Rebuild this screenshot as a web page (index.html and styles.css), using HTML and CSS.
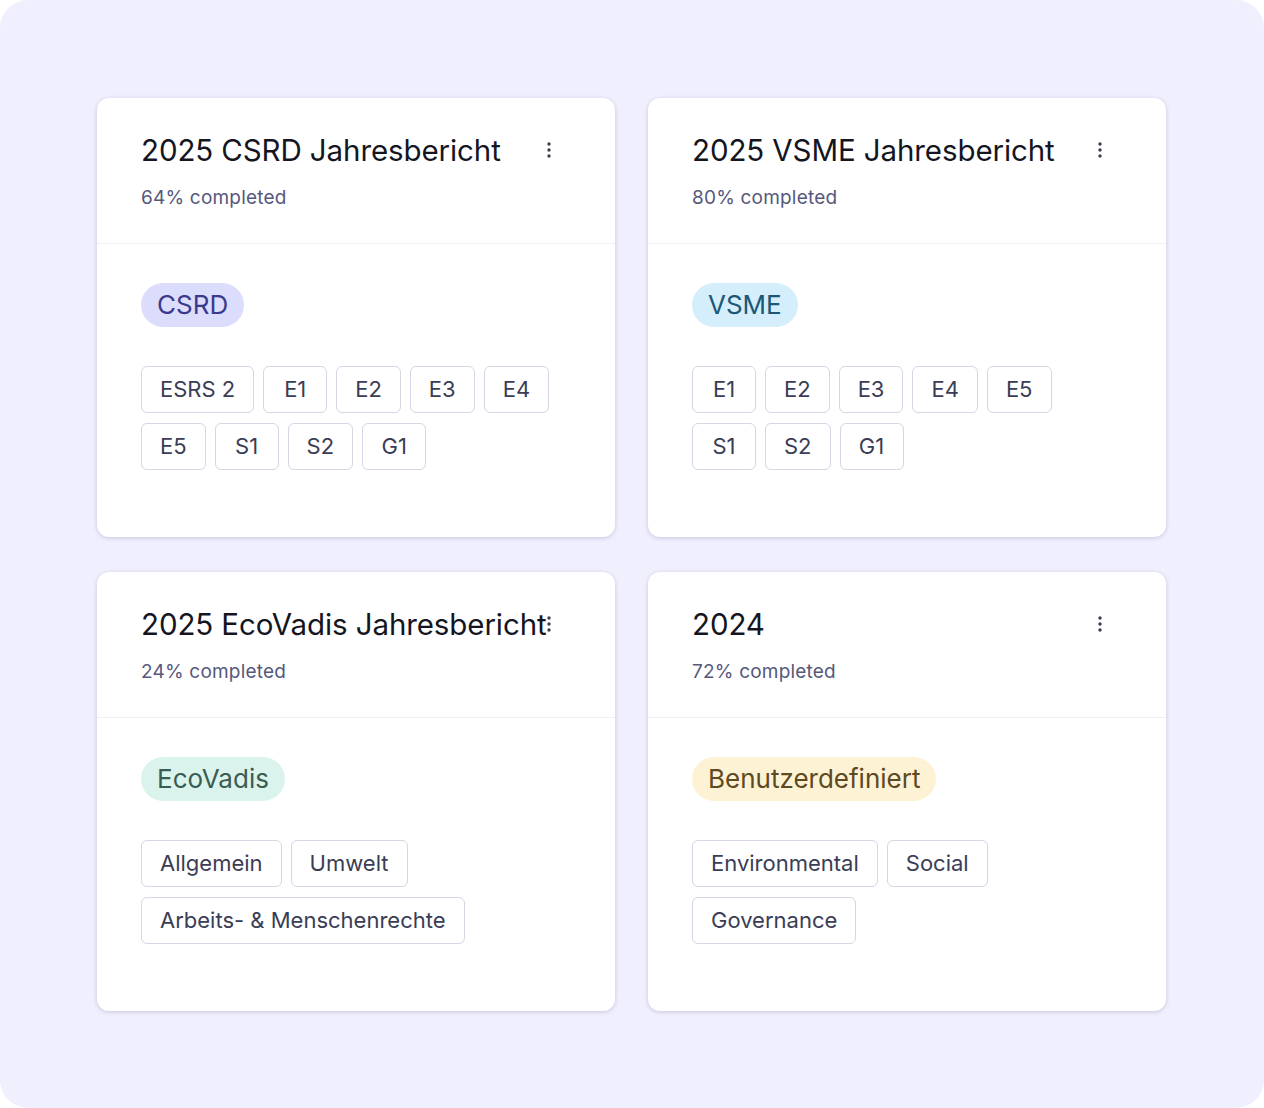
FILE: index.html
```html
<!DOCTYPE html>
<html lang="de">
  <head>
    <meta charset="UTF-8" />
    <meta name="viewport" content="width=device-width, initial-scale=1.0" />
    <title>Berichte</title>
    <link rel="stylesheet" href="styles.css">
  </head>
  <body>
    <div class="board">
      <div class="report">
        <div class="report-head">
          <div class="head-text">
            <h2>2025 CSRD Jahresbericht</h2>
            <p class="progress">64% completed</p>
          </div>
          <button class="menu" aria-label="Menü">
            <svg width="4" height="16" viewBox="0 0 4 16"><circle cx="2" cy="2" r="1.7"/><circle cx="2" cy="8" r="1.7"/><circle cx="2" cy="14" r="1.7"/></svg>
          </button>
        </div>
        <div class="report-body">
          <span class="framework csrd">CSRD</span>
          <div class="topics">
            <span class="topic">ESRS 2</span>
            <span class="topic">E1</span>
            <span class="topic">E2</span>
            <span class="topic">E3</span>
            <span class="topic">E4</span>
            <span class="topic">E5</span>
            <span class="topic">S1</span>
            <span class="topic">S2</span>
            <span class="topic">G1</span>
          </div>
        </div>
      </div>

      <div class="report">
        <div class="report-head">
          <div class="head-text">
            <h2>2025 VSME Jahresbericht</h2>
            <p class="progress">80% completed</p>
          </div>
          <button class="menu" aria-label="Menü">
            <svg width="4" height="16" viewBox="0 0 4 16"><circle cx="2" cy="2" r="1.7"/><circle cx="2" cy="8" r="1.7"/><circle cx="2" cy="14" r="1.7"/></svg>
          </button>
        </div>
        <div class="report-body">
          <span class="framework vsme">VSME</span>
          <div class="topics">
            <span class="topic">E1</span>
            <span class="topic">E2</span>
            <span class="topic">E3</span>
            <span class="topic">E4</span>
            <span class="topic">E5</span>
            <span class="topic">S1</span>
            <span class="topic">S2</span>
            <span class="topic">G1</span>
          </div>
        </div>
      </div>

      <div class="report">
        <div class="report-head">
          <div class="head-text">
            <h2>2025 EcoVadis Jahresbericht</h2>
            <p class="progress">24% completed</p>
          </div>
          <button class="menu" aria-label="Menü">
            <svg width="4" height="16" viewBox="0 0 4 16"><circle cx="2" cy="2" r="1.7"/><circle cx="2" cy="8" r="1.7"/><circle cx="2" cy="14" r="1.7"/></svg>
          </button>
        </div>
        <div class="report-body">
          <span class="framework ecovadis">EcoVadis</span>
          <div class="topics">
            <span class="topic">Allgemein</span>
            <span class="topic">Umwelt</span>
            <span class="topic">Arbeits- &amp; Menschenrechte</span>
          </div>
        </div>
      </div>

      <div class="report">
        <div class="report-head">
          <div class="head-text">
            <h2>2024</h2>
            <p class="progress">72% completed</p>
          </div>
          <button class="menu" aria-label="Menü">
            <svg width="4" height="16" viewBox="0 0 4 16"><circle cx="2" cy="2" r="1.7"/><circle cx="2" cy="8" r="1.7"/><circle cx="2" cy="14" r="1.7"/></svg>
          </button>
        </div>
        <div class="report-body">
          <span class="framework custom">Benutzerdefiniert</span>
          <div class="topics">
            <span class="topic">Environmental</span>
            <span class="topic">Social</span>
            <span class="topic">Governance</span>
          </div>
        </div>
      </div>
    </div>
  </body>
</html>
```

FILE: styles.css
```css
body {
  margin: 0;
  background-color: #ffffff;
  font-family: Inter, "Noto Sans", sans-serif;
}

.board {
  box-sizing: border-box;
  height: 1108px;
  padding: 98px 97px 97px;
  background-color: #f0effd;
  border-radius: 28px;
  display: grid;
  grid-template-columns: 518px 518px;
  grid-template-rows: 439px 439px;
  column-gap: 33px;
  row-gap: 35px;
}

.report {
  background-color: white;
  border-radius: 12px;
  box-shadow: 0 1px 4px rgba(60, 55, 110, 0.22);
  display: flex;
  flex-direction: column;
}

.report-head {
  display: flex;
  align-items: flex-start;
  padding: 34px 44px 33px;
  border-bottom: 1px solid #efeff5;
}

.head-text {
  flex: 1;
  min-width: 0;
}

h2 {
  margin: 0;
  font-size: 29.5px;
  line-height: 36px;
  font-weight: 400;
  color: #15151f;
  white-space: nowrap;
  letter-spacing: -0.1px;
}

.progress {
  margin: 18px 0 0;
  font-size: 19px;
  line-height: 24px;
  letter-spacing: 0.2px;
  color: #56587c;
}

.menu {
  width: 44px;
  height: 36px;
  padding: 0;
  border: none;
  background: none;
  display: flex;
  justify-content: center;
  align-items: center;
  cursor: pointer;
}

.menu svg {
  fill: #3c3d4f;
}

.report-body {
  padding: 39px 60px 0 44px;
}

.framework {
  display: inline-block;
  height: 44px;
  line-height: 44px;
  padding: 0 16px;
  border-radius: 22px;
  font-size: 26px;
}

.csrd {
  background-color: #dcdcfd;
  color: #3a3a8c;
}

.vsme {
  background-color: #d4eefc;
  color: #1c5876;
}

.ecovadis {
  background-color: #daf4ed;
  color: #3b5c53;
}

.custom {
  background-color: #fdf2d4;
  color: #5d4922;
}

.topics {
  margin-top: 39px;
  display: flex;
  flex-wrap: wrap;
  gap: 10px 9px;
}

.topic {
  box-sizing: border-box;
  min-width: 64px;
  height: 47px;
  line-height: 45px;
  padding: 0 18px;
  border: 1px solid #d6d6e4;
  border-radius: 6px;
  font-size: 22px;
  text-align: center;
  color: #3a3d55;
}
```
